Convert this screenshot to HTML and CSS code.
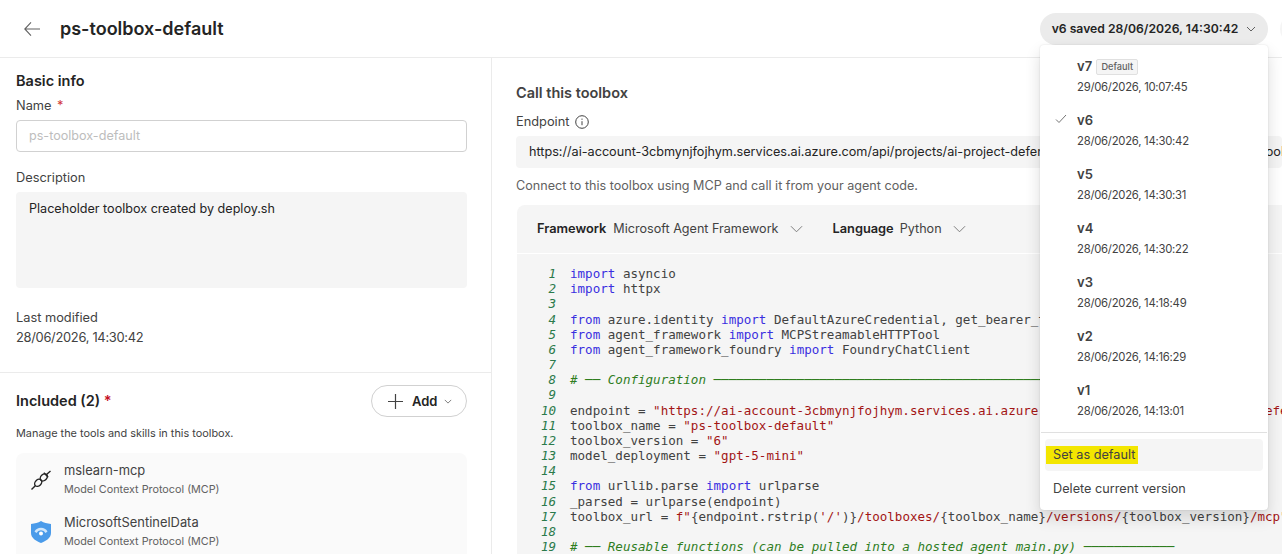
FILE: index.html
```html
<!DOCTYPE html>
<html lang="en">
<head>
    <meta charset="UTF-8">
    <title>ps-toolbox-default</title>
    <link rel="stylesheet" href="styles.css">
</head>
<body>
    <div class="page">
        <!-- Header -->
        <div class="header">
            <svg class="back-icon" width="16" height="14" viewBox="0 0 16 14" fill="none" stroke="#616161" stroke-width="1.1"><path d="M16 7H.8M7 .4.8 7 7 13.600"/></svg>
            <h1>ps-toolbox-default</h1>
            <button class="version-btn">v6 saved 28/06/2026, 14:30:42
                <svg width="10" height="6" viewBox="0 0 10 6" fill="none" stroke="#616161"><path d="M1 1l4 4 4-4"/></svg>
            </button>
            <span class="next-btn"></span>
        </div>

        <div class="main">
            <!-- Left panel -->
            <div class="left">
                <div class="basic">
                    <h2>Basic info</h2>
                    <label>Name <span class="req">*</span></label>
                    <div class="input">ps-toolbox-default</div>
                    <label class="desc-label">Description</label>
                    <div class="textarea">Placeholder toolbox created by deploy.sh</div>
                    <label class="mod-label">Last modified</label>
                    <div class="mod-value">28/06/2026, 14:30:42</div>
                </div>
                <div class="included">
                    <div class="included-head">
                        <h2>Included (2) <span class="req-strong">*</span></h2>
                        <button class="add-btn">
                            <svg width="15" height="15" viewBox="0 0 15 15" fill="none" stroke="#424242" stroke-width="1.2"><path d="M7.500 0v15M0 7.500h15"/></svg>
                            <span class="add-text">Add</span>
                            <svg width="8" height="5" viewBox="0 0 10 6" fill="none" stroke="#616161"><path d="M1 1l4 4 4-4"/></svg>
                        </button>
                    </div>
                    <p class="hint">Manage the tools and skills in this toolbox.</p>
                    <div class="tool-list">
                        <div class="tool">
                            <svg width="22" height="22" viewBox="0 0 22 22" fill="none" stroke="#242424" stroke-width="1.4"><path d="M1.500 20.500l3.800-3.800M16.800 5.200l3.700-3.200M13.800 3.800l4.400 4.400"/><ellipse cx="8.200" cy="13.800" rx="4" ry="3" transform="rotate(-45 8.200 13.800)"/><ellipse cx="13.800" cy="8.400" rx="4" ry="3" transform="rotate(-45 13.800 8.400)"/></svg>
                            <div>
                                <div class="tool-name">mslearn-mcp</div>
                                <div class="tool-type">Model Context Protocol (MCP)</div>
                            </div>
                        </div>
                        <div class="tool">
                            <svg width="22" height="22" viewBox="0 0 22 22"><path d="M11 0c3 1.800 6 2.600 10 3v9c0 5-5 8-10 10C6 20 1 17 1 12V3c4-.4 7-1.200 10-3z" fill="#4a9bea"/><path d="M4.500 10.500a7.500 7.500 0 0 1 13 0l-2 1.500a5 5 0 0 0-9 0z" fill="#cfe6fb"/><circle cx="11" cy="12.500" r="2" fill="#fff"/></svg>
                            <div>
                                <div class="tool-name">MicrosoftSentinelData</div>
                                <div class="tool-type">Model Context Protocol (MCP)</div>
                            </div>
                        </div>
                    </div>
                </div>
            </div>

            <!-- Right panel -->
            <div class="right">
                <h2 class="call-title">Call this toolbox</h2>
                <label class="endpoint-label">Endpoint
                    <svg width="14" height="14" viewBox="0 0 14 14" fill="none" stroke="#424242"><circle cx="7" cy="7" r="6.300"/><path d="M7 6.200v4M7 3.600v1.200"/></svg>
                </label>
                <div class="endpoint">https://ai-account-3cbmynjfojhym.services.ai.azure.com/api/projects/ai-project-defender-3cbmynjfojhym01/toolboxes/ps-toolbox-default/versions/6/mcp</div>
                <p class="connect">Connect to this toolbox using MCP and call it from your agent code.</p>
                <div class="code-card">
                    <div class="code-bar">
                        <span class="bar-label">Framework</span><span class="bar-value">Microsoft Agent Framework</span>
                        <svg class="bar-chev" width="13" height="8" viewBox="0 0 14 8" fill="none" stroke="#757575"><path d="M1 1l6 6 6-6"/></svg>
                        <span class="bar-label lang">Language</span><span class="bar-value">Python</span>
                        <svg class="bar-chev" width="13" height="8" viewBox="0 0 14 8" fill="none" stroke="#757575"><path d="M1 1l6 6 6-6"/></svg>
                    </div>
                    <div class="code">
                        <div class="gutter">1<br>2<br>3<br>4<br>5<br>6<br>7<br>8<br>9<br>10<br>11<br>12<br>13<br>14<br>15<br>16<br>17<br>18<br>19</div>
<pre><span class="kw">import</span> asyncio
<span class="kw">import</span> httpx

<span class="kw">from</span> azure.identity <span class="kw">import</span> DefaultAzureCredential, get_bearer_token_provider
<span class="kw">from</span> agent_framework <span class="kw">import</span> MCPStreamableHTTPTool
<span class="kw">from</span> agent_framework_foundry <span class="kw">import</span> FoundryChatClient

<span class="cm"># ── Configuration ─────────────────────────────────────────────────────────</span>

endpoint = <span class="st">"https://ai-account-3cbmynjfojhym.services.ai.azure.com/api/projects/ai-project-defender"</span>
toolbox_name = <span class="st">"ps-toolbox-default"</span>
toolbox_version = <span class="st">"6"</span>
model_deployment = <span class="st">"gpt-5-mini"</span>

<span class="kw">from</span> urllib.parse <span class="kw">import</span> urlparse
_parsed = urlparse(endpoint)
toolbox_url = <span class="st">f"</span>{endpoint.rstrip(<span class="st">'/'</span>)}<span class="st">/toolboxes/</span>{toolbox_name}<span class="st">/versions/</span>{toolbox_version}<span class="st">/mcp"</span>

<span class="cm"># ── Reusable functions (can be pulled into a hosted agent main.py) ────────────</span></pre>
                    </div>
                </div>
            </div>
        </div>

        <!-- Version dropdown -->
        <div class="menu">
            <div class="version"><div class="v-name">v7 <span class="badge">Default</span></div><div class="v-date">29/06/2026, 10:07:45</div></div>
            <div class="version">
                <svg class="check" width="12" height="10" viewBox="0 0 12 10" fill="none" stroke="#757575"><path d="M1 5.500 4 8.500 11 1"/></svg>
                <div class="v-name">v6</div><div class="v-date">28/06/2026, 14:30:42</div>
            </div>
            <div class="version"><div class="v-name">v5</div><div class="v-date">28/06/2026, 14:30:31</div></div>
            <div class="version"><div class="v-name">v4</div><div class="v-date">28/06/2026, 14:30:22</div></div>
            <div class="version"><div class="v-name">v3</div><div class="v-date">28/06/2026, 14:18:49</div></div>
            <div class="version"><div class="v-name">v2</div><div class="v-date">28/06/2026, 14:16:29</div></div>
            <div class="version"><div class="v-name">v1</div><div class="v-date">28/06/2026, 14:13:01</div></div>
            <div class="menu-divider"></div>
            <div class="menu-item hover"><mark>Set as default</mark></div>
            <div class="menu-item">Delete current version</div>
        </div>
    </div>
</body>
</html>
```

FILE: styles.css
```css
html, body {
    margin: 0;
    padding: 0;
    height: 100%;
    overflow: hidden;
}

body {
    font-family: Inter, "Noto Sans", sans-serif;
    font-size: 12.600px;
    color: #242424;
    background-color: white;
}

.page {
    position: relative;
    height: 554px;
    overflow: hidden;
}

.header {
    height: 57px;
    border-bottom: 1px solid #ebebeb;
    display: flex;
    align-items: center;
    padding-left: 24px;
}

.back-icon {
    margin-right: 20px;
}

h1 {
    font-size: 18px;
    font-weight: 600;
    margin: 0;
    flex: 1;
}

.version-btn {
    width: 228px;
    height: 32px;
    border: none;
    border-radius: 16px;
    background-color: #ebebeb;
    font-family: inherit;
    font-size: 12.200px;
    font-weight: 600;
    color: #242424;
    display: flex;
    align-items: center;
    justify-content: center;
    gap: 8px;
    padding: 0;
}

.next-btn {
    width: 32px;
    height: 32px;
    margin-left: 12px;
    margin-right: -30px;
    border-radius: 16px;
    background-color: #f5f5f5;
}

.main {
    display: flex;
}

.left {
    width: 491px;
    flex: none;
    border-right: 1px solid #ebebeb;
}

.basic {
    padding: 14px 24px 24px 16px;
    border-bottom: 1px solid #ebebeb;
}

h2 {
    font-size: 14.500px;
    font-weight: 600;
    margin: 0;
}

label {
    display: block;
    font-size: 12.800px;
    line-height: 18px;
    color: #424242;
}

.basic h2 {
    line-height: 18px;
    margin-bottom: 7px;
}

.req {
    color: #d13438;
    margin-left: 2px;
}

.req-strong {
    color: #c50f1f;
}

.input {
    height: 30px;
    margin-top: 5px;
    padding: 0 12px;
    border: 1px solid #d1d1d1;
    border-radius: 4px;
    line-height: 30px;
    color: #bdbdbd;
}

.desc-label {
    margin-top: 17px;
}

.textarea {
    height: 72px;
    margin-top: 5px;
    padding: 8px 13px 16px;
    border-radius: 4px;
    background-color: #f5f5f5;
    line-height: 18px;
}

.mod-label {
    margin-top: 21px;
}

.mod-value {
    margin-top: 1px;
    font-size: 12.900px;
    letter-spacing: -0.3px;
    line-height: 20px;
    color: #424242;
}

.included {
    padding: 12px 24px 0 16px;
}

.included-head {
    display: flex;
    align-items: center;
    justify-content: space-between;
}

.included-head h2 {
    padding-bottom: 2px;
}

.add-btn {
    width: 96px;
    height: 32px;
    border: 1px solid #d1d1d1;
    border-radius: 16px;
    background-color: white;
    font-family: inherit;
    font-size: 13px;
    font-weight: 600;
    color: #242424;
    display: flex;
    align-items: center;
    padding: 0 0 0 16px;
}

.add-text {
    margin: 0 6px 0 9px;
}

.hint {
    font-size: 10.900px;
    line-height: 16px;
    margin: 8px 0 12px;
    color: #424242;
}

.tool-list {
    background-color: #fafafa;
    border-radius: 8px;
    padding: 1px 14px 0;
    height: 130px;
}

.tool {
    display: flex;
    align-items: center;
    gap: 12px;
    height: 52px;
}

.tool-name {
    font-size: 12.900px;
    line-height: 18px;
    color: #424242;
}

.tool-type {
    font-size: 10.800px;
    line-height: 18px;
    margin-top: 1px;
    color: #616161;
}

.right {
    flex: 1;
    min-width: 0;
    padding: 26px 0 0 24px;
}

.call-title {
    line-height: 18px;
    color: #424242;
}

.endpoint-label {
    display: flex;
    align-items: center;
    gap: 6px;
    margin-top: 11px;
}

.endpoint {
    height: 32px;
    margin-top: 5px;
    padding-left: 13px;
    border-radius: 4px;
    background-color: #f5f5f5;
    font-size: 12.650px;
    line-height: 32px;
    white-space: nowrap;
    overflow: hidden;
}

.connect {
    margin: 8px 0 9px;
    line-height: 20px;
    color: #616161;
}

.code-card {
    margin-left: 1px;
    border-top-left-radius: 8px;
    background-color: #f5f5f5;
    overflow: hidden;
}

.code-bar {
    height: 47px;
    padding-bottom: 1px;
    border-bottom: 1px solid white;
    display: flex;
    align-items: center;
    padding-left: 20px;
}

.bar-label {
    font-size: 12.800px;
    font-weight: 600;
    margin-right: 7px;
}

.bar-label.lang {
    margin-left: 30px;
    margin-right: 6px;
}

.bar-value {
    color: #424242;
}

.bar-chev {
    margin-left: 11px;
}

.code {
    display: flex;
    padding-top: 12px;
    font-family: "DejaVu Sans Mono", monospace;
    font-size: 12.550px;
    line-height: 15.170px;
    color: #424242;
}

.gutter {
    width: 39px;
    margin-right: 14px;
    flex: none;
    text-align: right;
    font-style: italic;
    color: #2b7a4b;
}

pre {
    margin: 0;
    font: inherit;
    white-space: pre;
}

.kw {
    color: #3a2fe0;
}

.st {
    color: #a31515;
}

.cm {
    color: #2f7d1e;
    font-style: italic;
}

/* Dropdown over the page */
.menu {
    position: absolute;
    left: 1040px;
    top: 45px;
    width: 228px;
    height: 465px;
    box-sizing: border-box;
    padding-top: 9px;
    background-color: white;
    border-radius: 4px;
    box-shadow: 0 8px 16px rgba(0, 0, 0, 0.14), 0 0 2px rgba(0, 0, 0, 0.12);
}

.version {
    position: relative;
    height: 54px;
    padding-left: 37px;
}

.v-name {
    font-weight: 600;
    font-size: 13px;
    line-height: 24px;
    color: #424242;
}

.v-date {
    font-size: 11.300px;
    letter-spacing: -0.25px;
    line-height: 20px;
    margin-top: -1px;
    color: #424242;
}

.badge {
    display: inline-block;
    margin-left: 1px;
    padding: 0 4px;
    font-size: 9.200px;
    font-weight: 500;
    line-height: 14px;
    color: #616161;
    background-color: #f5f5f5;
    border: 1px solid #e0e0e0;
    border-radius: 2px;
    vertical-align: 1px;
}

.check {
    position: absolute;
    left: 15px;
    top: 6px;
}

.menu-divider {
    height: 1px;
    margin: 0 1px 6px;
    background-color: #e0e0e0;
}

.menu-item {
    height: 32px;
    margin: 0 5px 2px;
    padding-left: 8px;
    font-size: 12.700px;
    line-height: 32px;
    border-radius: 4px;
    color: #424242;
}

.menu-item.hover {
    background-color: #f5f5f5;
}

mark {
    display: inline-block;
    background-color: #f3e600;
    color: #424242;
    line-height: 18px;
    padding: 0 3px 0 7px;
    margin-left: -7px;
}
```
